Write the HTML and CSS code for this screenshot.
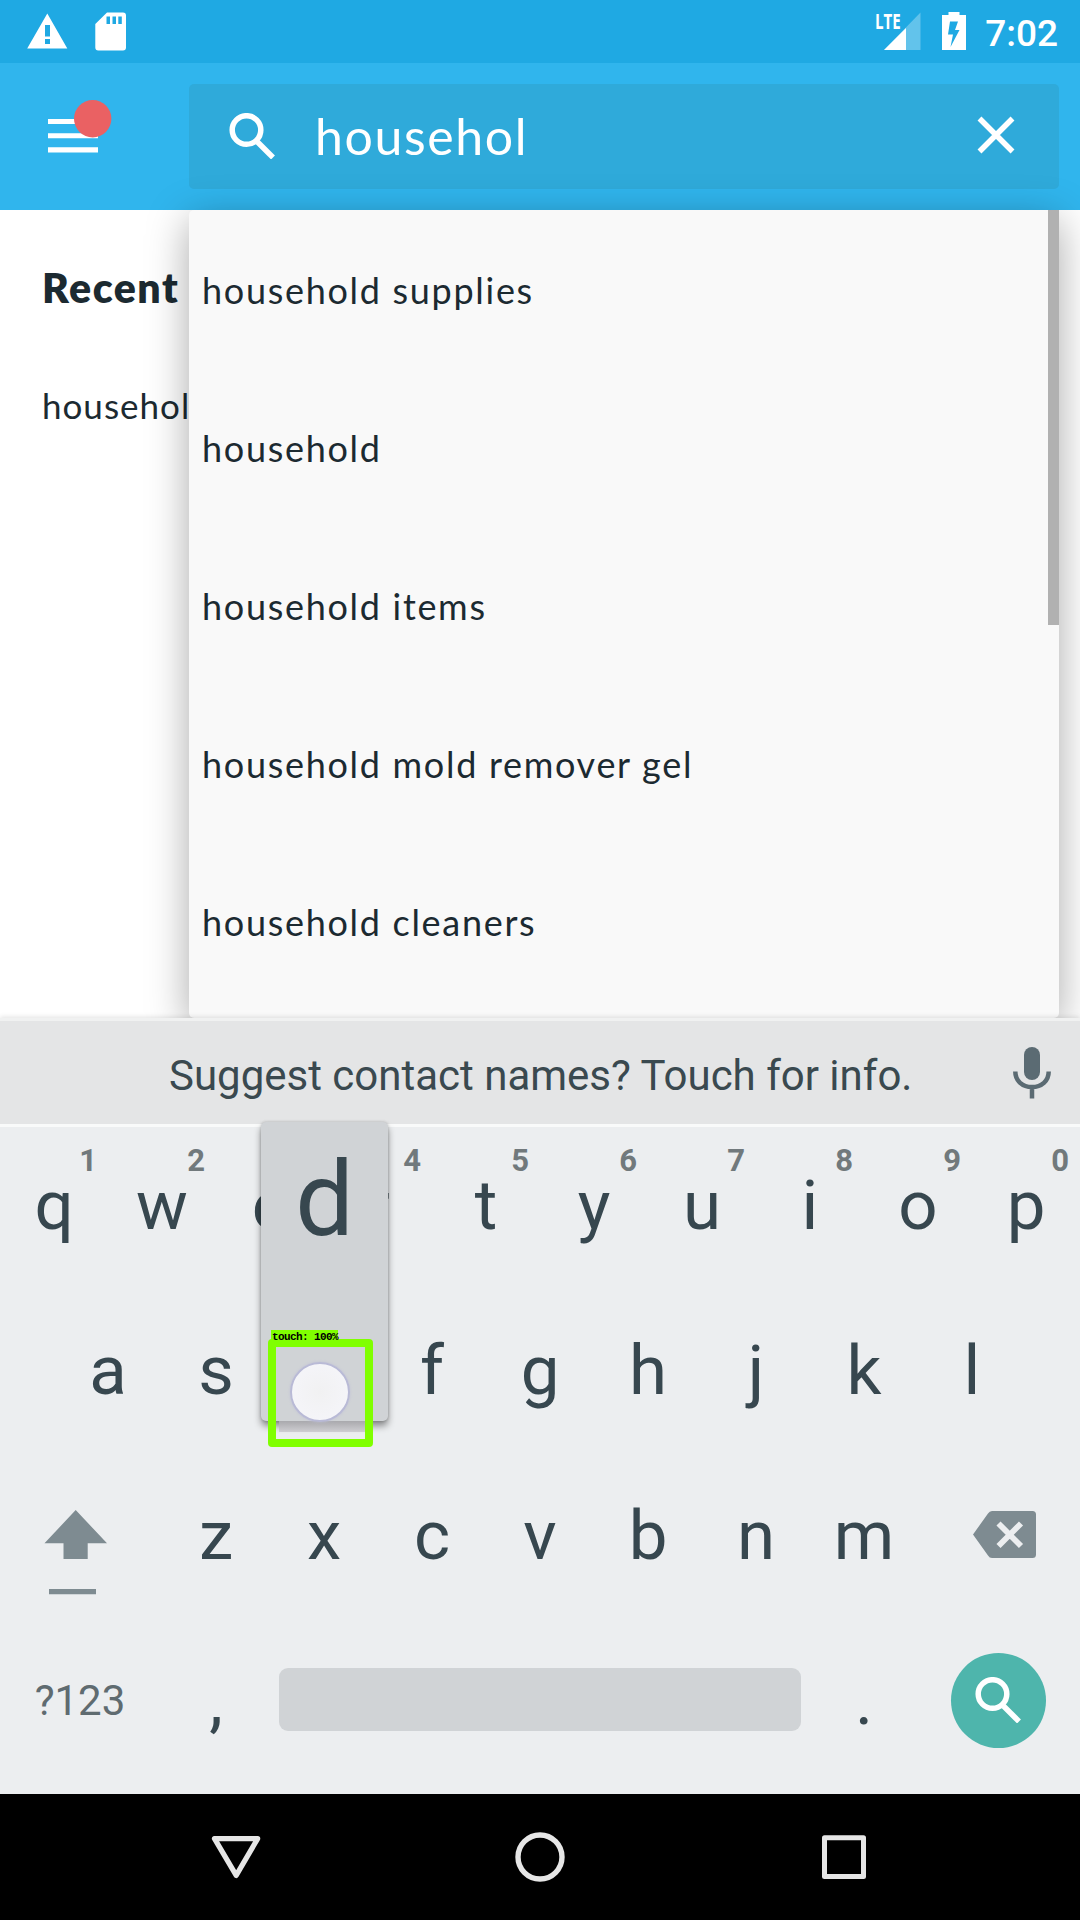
FILE: index.html
```html
<!DOCTYPE html>
<html lang="en">
<head>
<meta charset="utf-8">
<title>Search</title>
<link rel="stylesheet" href="styles.css">
</head>
<body>
<div class="screen">
  <div class="status">
    <svg class="status-left" width="140" height="63" viewBox="0 0 140 63">
      <path fill="#fff" fill-rule="evenodd" d="M47.3 13.5 67.3 48.6H27.2ZM45 25v11.500h5V25ZM45 39v5h5v-5Z"/>
      <path fill="#fff" fill-rule="evenodd" d="M107 12.500h16q3 0 3 3v32q0 3-3 3H98.300q-3 0-3-3V24ZM106.500 16.500v7.500h3.500v-7.500ZM112.500 16.500v7.500h3.500v-7.500ZM118.300 16.500v7.500h3.500v-7.500Z"/>
    </svg>
    <div class="status-right">
      <span class="lte">LTE</span>
      <svg width="90" height="63" viewBox="880 0 90 63">
        <path fill="#fff" fill-opacity=".3" d="M921.500 12.500V50H885Z"/>
        <path fill="#fff" d="M907 28V50H885Z"/>
        <path fill="#fff" fill-rule="evenodd" d="M949.500 12h11v3h6.500v35h-24V15h6.500ZM951 21.500l-2 13h5l-2.500 12.500L960.500 30h-4.500l3-8.500Z"/>
      </svg>
      <span class="clock">7:02</span>
    </div>
  </div>

  <div class="header">
    <div class="menu">
      <svg width="80" height="60" viewBox="40 95 80 60">
        <path fill="#fff" d="M48 119h50v5H48ZM48 133.300h50v5H48ZM48 147.300h50v5.300H48Z"/>
        <circle cx="92.700" cy="118.700" r="18.700" fill="#ea6163"/>
      </svg>
    </div>
    <div class="search">
      <svg class="lens" width="46" height="46" viewBox="0 0 46 46" fill="none" stroke="#fff" stroke-width="5.500">
        <circle cx="17.500" cy="17" r="14.300"/><path d="M28.500 29 44 44.500"/>
      </svg>
      <span class="query">househol</span>
      <svg class="close" width="38" height="38" viewBox="0 0 38 38" stroke="#fff" stroke-width="5.500"><path d="M2.500 2.500l33 33M35.500 2.500l-33 33"/></svg>
    </div>
  </div>

  <div class="content">
    <div class="recent">
      <div class="recent-title">Recent</div>
      <div class="recent-item">househol</div>
    </div>
    <div class="suggestions">
      <div class="item">household supplies</div>
      <div class="item">household</div>
      <div class="item">household items</div>
      <div class="item">household mold remover gel</div>
      <div class="item">household cleaners</div>
      <div class="scrollbar"></div>
    </div>
  </div>

  <div class="strip">
    <span class="strip-text">Suggest contact names? Touch for info.</span>
    <svg class="mic" width="38" height="52" viewBox="0 0 38 52">
      <rect x="11" y="0" width="16" height="33" rx="8" fill="#5b6b73"/>
      <path d="M2.300 24.500C2.300 34 9.500 40 19 40S35.700 34 35.700 24.500M19 40V51.500" fill="none" stroke="#5b6b73" stroke-width="4.500"/>
    </svg>
  </div>

  <div class="keyboard">
    <div class="row">
      <div class="key">q<span class="num">1</span></div><div class="key">w<span class="num">2</span></div><div class="key">e</div><div class="key">r<span class="num">4</span></div><div class="key">t<span class="num">5</span></div><div class="key">y<span class="num">6</span></div><div class="key">u<span class="num">7</span></div><div class="key">i<span class="num">8</span></div><div class="key">o<span class="num">9</span></div><div class="key">p<span class="num">0</span></div>
    </div>
    <div class="row row-middle">
      <div class="key">a</div><div class="key">s</div>
      <div class="key pressed">
        <div class="popup">d</div>
        <div class="touch">
          <span class="touch-label">touch: 100%</span>
          <div class="touch-shade"></div>
          <div class="touch-dot"></div>
        </div>
      </div>
      <div class="key">f</div><div class="key">g</div><div class="key">h</div><div class="key">j</div><div class="key">k</div><div class="key">l</div>
    </div>
    <div class="row">
      <div class="key wide">
        <svg width="162" height="165" viewBox="0 1454 162 165" fill="#7e8b91">
          <path d="M75.700 1510 107 1543.300H87.700V1559H63.500V1543.300H44.500ZM49 1589h47v5.300H49Z"/>
        </svg>
      </div>
      <div class="key">z</div><div class="key">x</div><div class="key">c</div><div class="key">v</div><div class="key">b</div><div class="key">n</div><div class="key">m</div>
      <div class="key wide">
        <svg width="162" height="165" viewBox="918 1454 162 165">
          <path fill="#7e8b91" d="M992 1511h40.500q3.500 0 3.500 3.500v40q0 3.500-3.500 3.500H992q-2.500 0-4-2.500L973 1534.500 988 1513.500q1.500-2.500 4-2.500Z"/>
          <path stroke="#eceef0" stroke-width="5.800" d="M998.500 1523.500 1021 1546M1021 1523.500 998.500 1546"/>
        </svg>
      </div>
    </div>
    <div class="row">
      <div class="key wide symbols">?123</div>
      <div class="key">,</div>
      <div class="space"></div>
      <div class="key">.</div>
      <div class="key wide enter">
        <div class="go">
          <svg width="46" height="46" viewBox="0 0 46 46" fill="none" stroke="#fff" stroke-width="5.500">
            <circle cx="17.500" cy="17" r="14.300"/><path d="M28.500 29 44 44.500"/>
          </svg>
        </div>
      </div>
    </div>
  </div>

  <div class="nav">
    <svg width="52" height="52" viewBox="210 1831 52 52" fill="none" stroke="#e6e6e6" stroke-width="5.200" stroke-linejoin="round"><path d="M214.500 1838.600H257.700L236.200 1875.400Z"/></svg>
    <svg width="52" height="52" viewBox="514 1831 52 52" fill="none" stroke="#e6e6e6" stroke-width="5.400"><circle cx="540" cy="1857" r="22"/></svg>
    <svg width="52" height="52" viewBox="818 1831 52 52" fill="none" stroke="#e6e6e6" stroke-width="5" stroke-linejoin="round"><rect x="824.500" y="1837.700" width="39" height="38.800"/></svg>
  </div>
</div>
</body>
</html>
```

FILE: styles.css
```css
* { box-sizing: border-box; }
body { margin: 0; background: #fff; }
svg { display: block; }
.screen {
  width: 1080px;
  height: 1920px;
  display: flex;
  flex-direction: column;
  overflow: hidden;
  font-family: Roboto, sans-serif;
}
.status {
  height: 63px;
  background: #1fa9e3;
  display: flex;
  justify-content: space-between;
  color: #fff;
}
.status-right { display: flex; padding-right: 22px; }
.lte {
  font: 700 21px/22px "Open Sans", sans-serif;
  width: 33px;
  height: 22px;
  margin: 10px -29px 0 0;
  transform: scaleX(.72);
  transform-origin: 0 0;
}
.clock {
  margin-left: 16px;
  font-size: 37px;
  font-weight: 500;
  line-height: 67px;
  white-space: nowrap;
}
.header {
  height: 147px;
  background: #30b5ed;
  display: flex;
  padding: 21px 21px 21px 0;
}
.menu { width: 189px; padding: 11px 0 0 40px; }
.search {
  flex: 1;
  display: flex;
  align-items: center;
  background: #2faada;
  border-radius: 5px;
  padding: 0 44px 0 40px;
  color: #fff;
}
.lens { margin-top: -1px; }
.query {
  flex: 1;
  margin-left: 40px;
  font-family: Lato, sans-serif;
  font-size: 50px;
  line-height: 105px;
  letter-spacing: 1.6px;
}
.close { margin-top: -3px; }
.content {
  height: 808px;
  display: flex;
  color: #1c2a31;
  font-family: Lato, sans-serif;
}
.recent { width: 189px; padding-left: 42px; white-space: nowrap; }
.recent-title {
  font-size: 41px;
  font-weight: 800;
  line-height: 60px;
  margin-top: 48px;
  letter-spacing: 1.5px;
}
.recent-item { font-size: 35px; line-height: 50px; margin-top: 62px; letter-spacing: 1px; }
.suggestions {
  position: relative;
  width: 870px;
  padding: 1px 0 0 13px;
  background: #f9f9f9;
  border-radius: 5px;
  box-shadow: 0 10px 42px rgba(0, 0, 0, .34);
}
.item { font-size: 36px; line-height: 158px; letter-spacing: 1.7px; }
.scrollbar {
  position: absolute;
  top: 0;
  right: 0;
  width: 11px;
  height: 415px;
  background: #b1b1b1;
}
.strip {
  position: relative;
  height: 106px;
  display: flex;
  align-items: center;
  padding: 2px 29px 0 169px;
  justify-content: space-between;
  background: #e4e5e6;
  border-top: 3px solid #f0f1f1;
  box-shadow: 0 -1px 5px rgba(0, 0, 0, .12);
}
.strip-text {
  margin-top: 4px;
  color: #3a494f;
  font-size: 42px;
  line-height: 60px;
  white-space: nowrap;
}
.mic { margin-top: -1px; }
.keyboard {
  position: relative;
  height: 670px;
  background: #eceef0;
  box-shadow: inset 0 3px #f9fafa;
}
.row { height: 165px; display: flex; }
.row-middle { padding: 0 54px; }
.key {
  position: relative;
  width: 108px;
  text-align: center;
  color: #37474f;
  font-size: 69px;
  line-height: 163px;
}
.num {
  position: absolute;
  top: 22px;
  right: 11px;
  color: #71797c;
  font-size: 31px;
  font-weight: 700;
  line-height: 30px;
}
.wide { width: 162px; }
.symbols { padding-right: 2px; color: #5f6b70; font-size: 42px; }
.space {
  width: 522px;
  height: 63px;
  margin: 49px 9px 0;
  border-radius: 9px;
  background: #d0d3d6;
}
.enter { display: flex; justify-content: center; padding: 34px 1px 0 0; }
.go {
  width: 95px;
  height: 95px;
  padding: 24px 0 0 24px;
  border-radius: 50%;
  background: #4eb5ac;
}
.popup {
  position: absolute;
  z-index: 1;
  left: -9px;
  top: -167px;
  width: 127px;
  height: 299px;
  border-radius: 5px;
  background: #d0d3d6;
  box-shadow: 0 5px 7px rgba(0, 0, 0, .42), 0 0 3px rgba(0, 0, 0, .2);
  font-size: 104px;
  line-height: 156px;
}
.touch {
  position: absolute;
  z-index: 2;
  left: -2px;
  top: 50px;
  width: 105px;
  height: 108px;
  border: 8px solid #80ff00;
  border-radius: 4px;
}
.touch-label {
  position: absolute;
  left: -5px;
  top: -17px;
  width: 67px;
  height: 12px;
  background: #80ff00;
  color: #000;
  font: 700 11px/15px "Liberation Mono", monospace;
  letter-spacing: -.6px;
  padding-left: 1px;
  white-space: nowrap;
}
.touch-shade {
  position: absolute;
  left: 3px;
  top: 74px;
  width: 86px;
  height: 11px;
  background: linear-gradient(#a9a9ad, #cfced2);
}
.touch-dot {
  position: absolute;
  left: 14px;
  top: 15px;
  width: 60px;
  height: 60px;
  border: 2px solid #b9bad6;
  border-radius: 50%;
  background: radial-gradient(#f1f1f2, #f6f6fb);
  box-shadow: 0 0 3px #c0c1d6;
}
.nav {
  height: 126px;
  background: #000;
  display: flex;
  justify-content: space-between;
  align-items: center;
  padding: 0 210px;
}
```
